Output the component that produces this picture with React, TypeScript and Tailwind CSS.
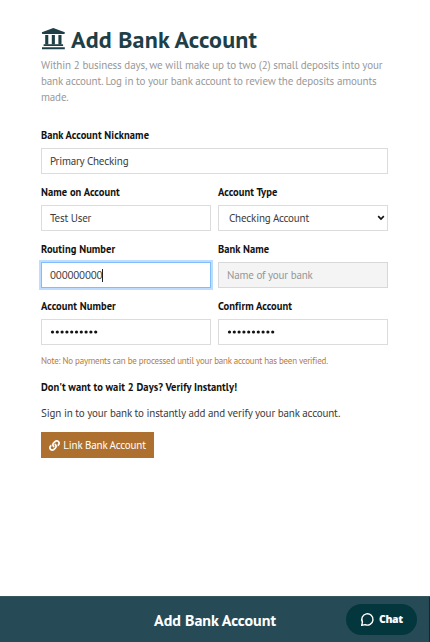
import { ReactNode } from 'react';
import { clsx } from 'clsx';
import { FaLink } from 'react-icons/fa';

interface FieldProps {
  label: string;
  variant?: 'default' | 'focused' | 'disabled';
  className?: string;
  children: ReactNode;
}

const variantStyles = {
  default: 'border-[#dcdcdc] bg-white text-[#3c3c3c]',
  focused:
    'border-[#80bdff] bg-white text-[#3c3c3c] shadow-[0_0_0_2px_rgba(0,123,255,0.25)]',
  disabled: 'border-[#d8d8d8] bg-[#f4f4f4] text-[#969696]',
};

const Field = ({ label, variant = 'default', className, children }: FieldProps) => {
  return (
    <div className={clsx('min-w-0', className)}>
      <div className="h-[20px] text-[10.5px] leading-[14px] font-bold tracking-[0.07px] whitespace-nowrap text-[#111]">
        {label}
      </div>
      <div
        className={clsx(
          'flex h-[26px] items-center border pl-[8px] text-[11px] leading-[16px] tracking-[-0.17px] whitespace-nowrap',
          variantStyles[variant]
        )}
      >
        {children}
      </div>
    </div>
  );
};

// Masked value of a password field
const Dots = ({ count }: { count: number }) => (
  <svg viewBox="0 0 50 4" className="h-[4px] w-[50px]">
    {Array.from({ length: count }, (_, i) => (
      <circle key={i} cx={2.5 + i * 4.8} cy="2" r="1.6" fill="#111" />
    ))}
  </svg>
);

const BankIcon = () => (
  <svg viewBox="0 0 24 24" className="size-[24px]" fill="currentColor">
    <path d="M12.3 0 23.8 4.2V5.2Q23.8 6 22.8 6H1.9Q.9 6 .9 5.2V4.2Z" />
    <path d="M4.2 7H7.3V16.4H4.2ZM10.8 7H13.9V16.4H10.8ZM17.4 7H20.5V16.4H17.4Z" />
    <path d="M2.6 16.2H22.1V17.9H2.6ZM1 19.2H23.8V21.2H1Z" />
  </svg>
);

const App = () => {
  return (
    <div className="flex h-[642px] w-[430px] flex-col overflow-hidden bg-white font-['PT_Sans','Noto_Sans_CJK_SC',sans-serif]">
      <main className="flex-1 pt-[24px] pr-[42px] pl-[41px]">
        <h1 className="flex h-[32px] items-center text-[#1e3f47]">
          <BankIcon />
          <span className="ml-[6px] text-[24px] leading-[32px] font-bold tracking-[0.19px] whitespace-nowrap">
            Add Bank Account
          </span>
        </h1>
        <p className="mt-px text-[11px] leading-[16px] tracking-[-0.14px] whitespace-nowrap text-[#999]">
          Within 2 business days, we will make up to two (2) small deposits into your
          <br />
          bank account. Log in to your bank account to review the deposits amounts
          <br />
          made.
        </p>

        <div className="mt-[23px] grid grid-cols-2 gap-x-[7px] gap-y-[11px]">
          <Field label="Bank Account Nickname" className="col-span-2">
            Primary Checking
          </Field>
          <Field label="Name on Account">Test User</Field>
          <Field label="Account Type">
            <span className="pl-[2px]">Checking Account</span>
            <svg viewBox="0 0 8 6" className="mr-[2px] ml-auto h-[6px] w-[8px]">
              <path d="M1.2 1.2 4 4l2.8-2.8" fill="none" stroke="#111" strokeWidth="1.7" />
            </svg>
          </Field>
          <Field label="Routing Number" variant="focused">
            <span>000000000</span>
            <span className="h-[13px] w-px bg-[#222]" />
          </Field>
          <Field label="Bank Name" variant="disabled">
            Name of your bank
          </Field>
          <Field label="Account Number">
            <Dots count={10} />
          </Field>
          <Field label="Confirm Account">
            <Dots count={10} />
          </Field>
        </div>

        <p className="mt-[10px] text-[9px] leading-[12px] tracking-[-0.22px] whitespace-nowrap text-[#b87a3a]">
          Note: No payments can be processed until your bank account has been verified.
        </p>
        <p className="mt-[12px] text-[10.5px] leading-[16px] font-bold tracking-[0.07px] whitespace-nowrap text-[#111]">
          Don't want to wait 2 Days? Verify Instantly!
        </p>
        <p className="mt-[10px] text-[11px] leading-[16px] tracking-[-0.15px] whitespace-nowrap text-[#3c3c3c]">
          Sign in to your bank to instantly add and verify your bank account.
        </p>
        <button className="mt-[11px] flex h-[26px] w-[113px] items-center justify-center gap-[3px] bg-[#ad702e] text-[11px] tracking-[-0.16px] whitespace-nowrap text-white">
          <FaLink className="size-[11px]" />
          <span>Link Bank Account</span>
        </button>
      </main>

      <footer className="relative flex h-[46px] items-center justify-center border-t border-[#35565f] bg-[#264b56]">
        <span className="text-[16px] leading-[20px] font-bold whitespace-nowrap text-white">
          Add Bank Account
        </span>
        <button className="absolute top-[7px] right-[13px] flex h-[31px] w-[71px] items-center rounded-full bg-[#03363d] pl-[14px] text-[10.5px] font-extrabold text-white">
          <svg viewBox="0 0 16 16" className="size-[15px]" fill="none" stroke="currentColor">
            <path
              d="M2.6 10.8A6 6 0 1 1 5.4 13.4L1.8 14.2Z"
              strokeWidth="1.5"
              strokeLinejoin="round"
            />
          </svg>
          <span className="ml-[4px] font-['Open_Sans',sans-serif] tracking-[-0.4px]">Chat</span>
        </button>
        <div className="absolute top-0 right-0 h-full w-px bg-[#10282e]" />
      </footer>
    </div>
  );
};

export default App;
